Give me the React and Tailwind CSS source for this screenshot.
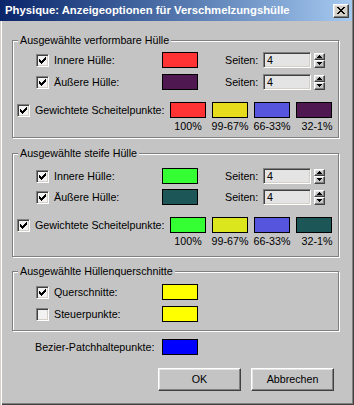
import React from "react";

const raised =
  "border border-t-white border-l-white border-b-[#404040] border-r-[#404040] shadow-[inset_-1px_-1px_0_#808080,inset_1px_1px_0_#e4e4e4]";
const sunken =
  "border border-t-[#808080] border-l-[#808080] border-b-white border-r-white shadow-[inset_1px_1px_0_#404040,inset_-1px_-1px_0_#d4d0c8]";

const CheckMark = () => (
  <svg width="7" height="7" viewBox="0 0 7 7" shapeRendering="crispEdges">
    <path
      d="M6 0h1v1h-1z M5 1h2v1h-2z M0 2h1v1h-1z M4 2h3v1h-3z M0 3h2v1h-2z M3 3h3v1h-3z M0 4h5v1h-5z M1 5h3v1h-3z M2 6h1v1h-1z"
      fill="#000"
    />
  </svg>
);

const Checkbox = ({ checked }) => (
  <div className={`w-[13px] h-[13px] shrink-0 bg-[#f2f2f2] flex items-center justify-center ${sunken}`}>
    {checked && <CheckMark />}
  </div>
);

const Swatch = ({ bg }) => <div className={`w-[36px] h-[16px] shrink-0 border border-black ${bg}`} />;

const Arrow = ({ up }) => (
  <svg width="5" height="3" viewBox="0 0 5 3" shapeRendering="crispEdges">
    {up ? (
      <path d="M2 0h1v1h-1z M1 1h3v1h-3z M0 2h5v1h-5z" fill="#000" />
    ) : (
      <path d="M0 0h5v1h-5z M1 1h3v1h-3z M2 2h1v1h-1z" fill="#000" />
    )}
  </svg>
);

const Spinner = () => (
  <div className="ml-[3px] w-[11px] h-[15px] shrink-0 flex flex-col">
    <div className={`flex-1 flex items-center justify-center ${raised}`}>
      <Arrow up />
    </div>
    <div className={`flex-1 flex items-center justify-center ${raised}`}>
      <Arrow />
    </div>
  </div>
);

const HullRow = ({ label, bg, className = "" }) => (
  <div className={`flex items-center h-[16px] pl-[23px] ${className}`}>
    <Checkbox checked />
    <span className="ml-[5px] w-[108px] shrink-0 whitespace-nowrap">{label}</span>
    <Swatch bg={bg} />
    <span className="ml-[27px] w-[38px] shrink-0">Seiten:</span>
    <div className={`w-[48px] h-[16px] shrink-0 bg-[#e4e4e4] pl-[3px] flex items-center ${sunken}`}>4</div>
    <Spinner />
  </div>
);

const WeightRow = ({ colors, className = "" }) => (
  <div className={className}>
    <div className="flex items-center h-[16px] pl-[4px]">
      <Checkbox checked />
      <span className="ml-[5px] w-[130px] shrink-0 whitespace-nowrap">Gewichtete Scheitelpunkte:</span>
      <div className="ml-[5px] flex gap-[6px]">
        {colors.map((c) => (
          <Swatch key={c} bg={c} />
        ))}
      </div>
    </div>
    <div className="flex gap-[6px] pl-[157px] mt-[2px] leading-[13px] whitespace-nowrap">
      <span className="w-[36px] flex justify-center">100%</span>
      <span className="w-[36px] flex justify-center">99-67%</span>
      <span className="w-[36px] flex justify-center">66-33%</span>
      <span className="w-[36px] flex justify-center pl-[6px]">32-1%</span>
    </div>
  </div>
);

const Group = ({ title, className, children }) => (
  <div className={`relative w-[327px] border border-[#808080] shadow-[1px_1px_0_#fff,inset_1px_1px_0_#fff] ${className}`}>
    <span className="absolute -top-[7px] left-[5px] px-[2px] bg-[#c4c4c4] leading-[13px] whitespace-nowrap">{title}</span>
    {children}
  </div>
);

export default function App() {
  return (
    <div className="w-[354px] h-[405px] bg-[#c4c4c4] flex flex-col font-['Liberation_Sans',Arial,sans-serif] text-[10.7px] text-black shadow-[inset_1px_0_0_#d4d0c8,inset_2px_0_0_#fff,inset_-1px_-1px_0_#404040,inset_-2px_-2px_0_#808080] overflow-hidden">
      <div className="h-[21px] mr-[2px] shrink-0 flex items-center pl-[5px] pr-[3px] bg-gradient-to-r from-[#0a246a] to-[#a6caf0]">
        <span className="flex-1 text-white font-bold text-[11.3px] whitespace-nowrap">
          Physique: Anzeigeoptionen für Verschmelzungshülle
        </span>
        <div className={`w-[16px] h-[14px] bg-[#d4d0c8] flex items-center justify-center ${raised}`}>
          <svg width="8" height="7" viewBox="0 0 8 7" shapeRendering="crispEdges">
            <path
              d="M0 0h2v1h-2z M6 0h2v1h-2z M1 1h2v1h-2z M5 1h2v1h-2z M2 2h4v1h-4z M3 3h2v1h-2z M2 4h4v1h-4z M1 5h2v1h-2z M5 5h2v1h-2z M0 6h2v1h-2z M6 6h2v1h-2z"
              fill="#000"
            />
          </svg>
        </div>
      </div>

      <div className="pl-[12px] flex flex-col">
        <Group title="Ausgewählte verformbare Hülle" className="mt-[19px] h-[98px] pt-[11px]">
          <HullRow label="Innere Hülle:" bg="bg-[#ff3333]" />
          <HullRow label="Äußere Hülle:" bg="bg-[#501850]" className="mt-[6px]" />
          <WeightRow
            className="mt-[12px]"
            colors={["bg-[#ff3333]", "bg-[#e6dc1c]", "bg-[#5555dd]", "bg-[#501850]"]}
          />
        </Group>

        <Group title="Ausgewählte steife Hülle" className="mt-[15px] h-[104px] pt-[14px]">
          <HullRow label="Innere Hülle:" bg="bg-[#33ff33]" />
          <HullRow label="Äußere Hülle:" bg="bg-[#1c5656]" className="mt-[5px]" />
          <WeightRow
            className="mt-[12px]"
            colors={["bg-[#33ff33]", "bg-[#dce61c]", "bg-[#5555dd]", "bg-[#1c5656]"]}
          />
        </Group>

        <Group title="Ausgewählte Hüllenquerschnitte" className="mt-[14px] h-[60px] pt-[12px]">
          <div className="flex items-center h-[16px] pl-[23px]">
            <Checkbox checked />
            <span className="ml-[5px] w-[108px] shrink-0">Querschnitte:</span>
            <Swatch bg="bg-[#ffff00]" />
          </div>
          <div className="flex items-center h-[16px] pl-[23px] mt-[6px]">
            <Checkbox />
            <span className="ml-[5px] w-[108px] shrink-0">Steuerpunkte:</span>
            <Swatch bg="bg-[#ffff00]" />
          </div>
        </Group>

        <div className="flex items-center h-[16px] pl-[23px] mt-[8px]">
          <span className="w-[127px] shrink-0">Bezier-Patchhaltepunkte:</span>
          <Swatch bg="bg-[#0000ff]" />
        </div>

        <div className="flex gap-[10px] pl-[146px] mt-[13px]">
          <button className={`w-[83px] h-[23px] bg-[#c4c4c4] ${raised}`}>OK</button>
          <button className={`w-[83px] h-[23px] bg-[#c4c4c4] ${raised}`}>Abbrechen</button>
        </div>
      </div>
    </div>
  );
}
